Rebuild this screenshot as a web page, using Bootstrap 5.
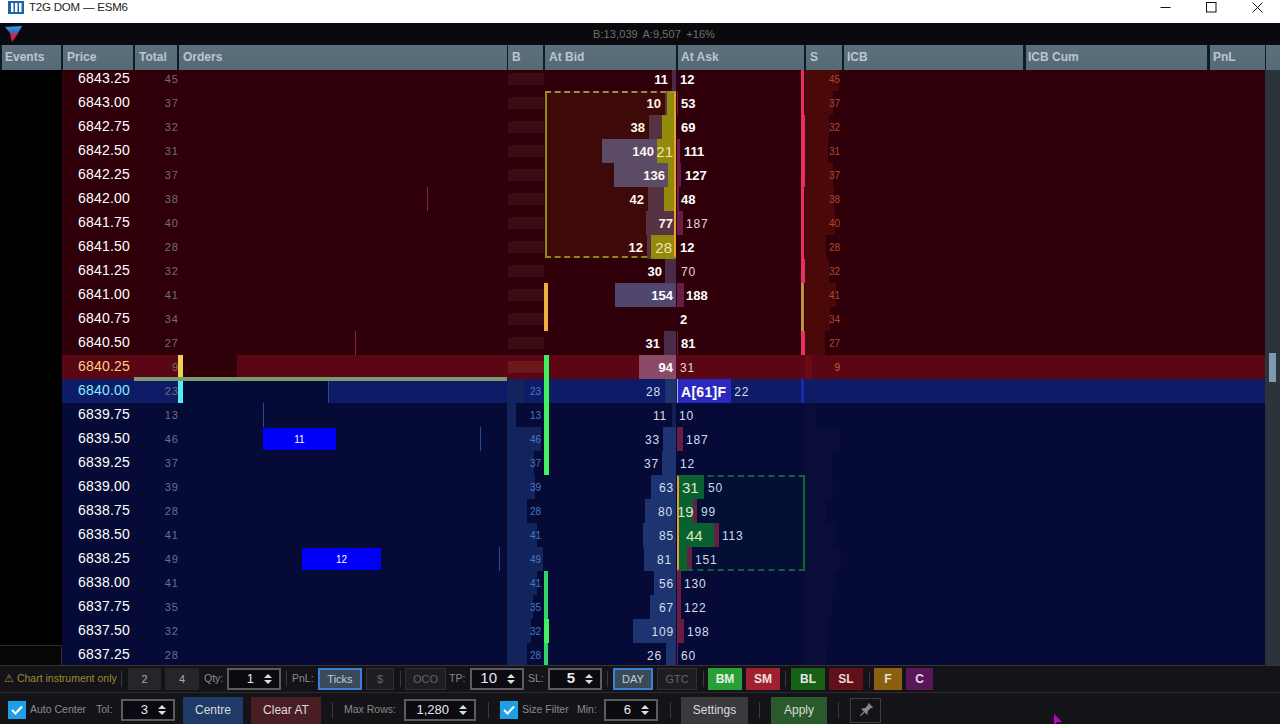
<!DOCTYPE html>
<html lang="en">
<head>
<meta charset="utf-8">
<title>T2G DOM — ESM6</title>
<link href="https://cdn.jsdelivr.net/npm/bootstrap@5.3.0/dist/css/bootstrap.min.css" rel="stylesheet">
<style>
html,body{height:724px;overflow:hidden;background:#000;font-family:"Liberation Sans",Arial,sans-serif}
.shell{width:1280px;height:724px;position:relative;overflow:hidden}
.ttl{height:23px;background:#fff;color:#222;font-size:11.5px;letter-spacing:-.2px;padding-bottom:8px}
.ttl-ic{width:16px;height:13px;margin:0 5px 0 8px}
.wbtn{width:46px;height:15px}
.topb{height:22px;background:#0a0a0e;color:#6f6f6f;font-size:11px;padding-left:5px}
.topb span{margin-left:588px;letter-spacing:.1px;word-spacing:2px}
.hdr{height:25px;background:#0c1c26}
.hd{height:25px;background:linear-gradient(#5b6f7c,#566a76);color:#bcc6cc;font-size:12px;font-weight:700;padding-left:3px;line-height:24px}
.h1{width:59px;margin-left:2px}.h2{width:70px;margin-left:2px;padding-left:4px}.h3{width:42px;margin-left:2px;padding-left:4px}.h4{width:328px;margin-left:2px;padding-left:4px}
.h5{width:35px;margin-left:1px;padding-left:4px}.h6{width:131px;margin-left:2px;padding-left:4px}.h7{width:126px;margin-left:2px}.h8{width:36px;margin-left:2px;padding-left:4px}
.h9{width:179px;margin-left:2px}.h10{width:181px;margin-left:3px;padding-left:2px}.h11{width:55px;margin-left:3px}.h12{width:14px;margin-left:1px}
.bodyw{height:595px;overflow:hidden;position:relative}
.rows{width:1265px;margin-top:-3px;position:relative}
.scr{width:15px;background:#2a343a;padding:283px 4px 0 4px}
.thumb{height:29px;background:#7f9aae}
.ro{height:24px}
.ro>div{height:24px;position:relative;flex:none}
.up{background:#30000a}.dn{background:#050a36}
.hia{background:#5a0614}.hib{background:#0e1c68}
.c-ev{width:62px;background:#000}
.c-pr{width:72px;color:#fff;font-size:14px;line-height:22px;padding-left:16px;letter-spacing:.2px}
.hia .c-pr{color:#ffd080}.hib .c-pr{color:#80f0ff}
.ro>.c-to{width:45px;margin-right:-1px;color:#6e6e6e;font-size:11px;line-height:25px;text-align:right;letter-spacing:1px}
.dn .c-to{color:#6c7080}
.c-or{width:329px}.c-b{width:37px}
.c-bd{width:133px}.c-as{width:128px}.c-s{width:38px}.c-ic{width:181px}.c-cu{width:184px}.c-pn{width:57px}
.c-bd,.c-as{display:flex;align-items:center;line-height:24px;font-size:13px;color:#e4e4ee}
.c-bd{justify-content:flex-end}
.up .c-bd,.up .c-as,.hia .c-bd,.hia .c-as{color:#fff}
.dn .c-bd,.dn .c-as,.hib .c-bd,.hib .c-as{font-size:12px;letter-spacing:.8px;color:#d8deee}
.nm{position:relative;z-index:2;top:1px}
.bo{font-weight:700;letter-spacing:0!important;font-size:13px}
.lite{font-weight:400;font-size:12px;letter-spacing:.8px;color:#e8d8dc}
.ro i{position:absolute;display:block;font-style:normal}
.pb{top:0;bottom:0;right:1px;background:#50466e}
.pd{top:0;bottom:0;right:1px;background:#4a2c48}
.pl{top:0;bottom:0;right:1px;background:#8a4a68}
.bb{top:0;bottom:0;right:1px;background:#1e3470}
.bd{top:0;bottom:0;right:1px;background:#121f50}
.yb{top:0;bottom:0;right:2px;background:#8c8a0a;z-index:1}
.rb{top:0;bottom:0;left:0;background:#6a1c44}
.gb{top:0;bottom:0;left:0;background:#0a6030}
.ro .mid{position:absolute;z-index:3;top:1px;line-height:24px;font-size:15px;color:#e8ecc8;letter-spacing:0}
.ln{top:0;bottom:0;left:0;background:#40f060;width:5px;z-index:3}
.ln4{width:4px;background:#30d468}
.lny{width:4px;background:#eeb040}
.sp{top:0;bottom:0;right:1px;width:3px;background:#e83060;z-index:3}
.sw{right:0;width:4px}.spy{background:#c09040}.spb{background:#1a2ab0}
.db{left:1px;top:6px;height:12px;background:#3c0c14}
.hia .db{background:#6a1a1a}
.nb{top:0;bottom:0;left:0;background:#12245c}
.sbar{top:0;bottom:0;left:0;background:#4a0808}
.sf{top:0;bottom:0;left:0;background:#0a0c3a}
.hia .sbar{background:#6a0a14}
.ro .num{right:3px;top:1px;line-height:24px;font-size:10px;color:#4a78c0;z-index:2}
.ro .num2{color:#a84a30}
.hia .num2{color:#d06020}
.tick{top:0;bottom:0;width:1px;background:#80283a}
.tb{background:#2a4a90}
.cur{left:0;top:0;bottom:0;width:5px;background:#f0d050;z-index:3}
.curb{background:#50f0f0}
.odk{left:0;top:0;bottom:0;background:#30000a}
.odn{left:0;top:0;bottom:0;background:#050a36}
.ob{top:1px;height:22px;background:#0000f8;color:#fff;font-size:10px;text-align:center;line-height:24px}
.askf{left:0;top:0;bottom:0;width:54px;background:#2a2ac0;border-left:1px solid #a8a8e8;z-index:1}
.af{font-weight:700;font-size:14px!important;letter-spacing:.3px!important;color:#fff!important}
.box1,.box2,.lastline,.ebox{position:absolute}
.box1{left:545px;top:24px;width:131px;height:167px;border-top:2px dashed #9c8c44;border-bottom:2px dashed #8a8a10;border-left:2px solid #8f8a10;border-right:2px solid #e8a030;background:rgba(255,140,0,.07);z-index:4;pointer-events:none}
.box2{left:677px;top:408px;width:128px;height:96px;border-top:2px dashed #14603a;border-bottom:2px dashed #14603a;border-right:2px solid #0a6a30;border-left:2px solid #e0a030;background:rgba(0,120,60,.05);z-index:4}
.lastline{left:134px;top:310px;width:373px;height:4px;background:#7a9a70;z-index:5}
.ebox{left:0;top:575px;width:62px;height:20px;border-top:1px solid #2c3020;border-right:1px solid #2c3020;background:#060606;z-index:5}
.tool{background:#141418;color:#8a8a8a;font-size:10.5px}
.t1{height:28px;border-top:1px solid #34342c;border-bottom:1px solid #2c2c30;padding-bottom:1px}
.t2{height:31px;padding-top:3px}
.sepv{width:1px;height:16px;background:#3a3a3e;flex:none}
.lbl{flex:none;white-space:nowrap}
.warn{color:#a08a30}
.btn.tbn{height:22px;padding:0;border:1px solid transparent;border-radius:0;font-size:11px;color:#a8a8a8;background:#26262a;flex:none;line-height:20px}
.btn.dim{background:#1e1e22;border-color:#303034;color:#666}
.btn.act{background:#3a4a5a;border:2px solid #3a80d8;color:#c4ccd4;line-height:18px}
.btn.buy{background:#28a038;color:#e8f0e8;font-weight:700;font-size:12px}
.btn.sel{background:#a02030;color:#f0e0e0;font-weight:700;font-size:12px}
.btn.bl{background:#186018;color:#e0e8e0;font-weight:700;font-size:12px}
.btn.sll{background:#601018;color:#e8d8d8;font-weight:700;font-size:12px}
.btn.ff{background:#8a6010;color:#e8e0d0;font-weight:700;font-size:12px}
.btn.cc{background:#581858;color:#e8d8e8;font-weight:700;font-size:12px}
.btn.big{height:27px;border:0;border-radius:0;padding:0;flex:none;font-size:12px;align-self:flex-end;line-height:27px;color:#dcdcdc}
.btn.bce{background:#1e3a66}.btn.bca{background:#4a1c24}.btn.bse{background:#3a3a3e}.btn.bap{background:#2a5a2c}
.btn.pinb{height:25px;padding:0;background:#141418;border:1px solid #3e3e42;border-radius:0;flex:none}
.spn{height:22px;border:2px solid #5c5c60;background:#0a0a10;color:#e8e8e8;font-size:13px;flex:none}
.spn span{flex:1;text-align:right}
.spn svg{margin:0 7px 0 10px;flex:none}
.sz14{font-size:15px}.sb{font-weight:700}
.cbx{width:18px;height:18px;background:#1ea0e8;flex:none}
.w16{width:16px}.w17{width:17px}.w18{width:18px}.w21{width:21px}.w27{width:27px}.w28{width:28px}.w31{width:31px}.w33{width:33px}.w34{width:34px}.w40{width:40px}.w41{width:41px}.w44{width:44px}.w46{width:46px}.w54{width:54px}.w56{width:56px}.w58{width:58px}.w60{width:60px}.w67{width:67px}.w70{width:70px}.w72{width:72px}.w112{width:112px}
.l3{margin-left:3px}.l4{margin-left:4px}.l5{margin-left:5px}.l6{margin-left:6px}.l8{margin-left:8px}.l9{margin-left:9px}.l10{margin-left:10px}.l11{margin-left:11px}.l12{margin-left:12px}
.pnt{position:absolute;left:1054px;top:714px;z-index:9}
</style>
</head>
<body>
<div class="shell d-flex flex-column">
  <div class="ttl d-flex align-items-center">
    <svg class="ttl-ic" viewBox="0 0 16 13"><rect width="16" height="13" fill="#1a66a8"/><rect x="3" y="2" width="2.5" height="9" fill="#fff"/><rect x="7" y="2" width="2.5" height="9" fill="#fff"/><rect x="11" y="2" width="2.5" height="9" fill="#fff"/></svg>
    <span>T2G DOM — ESM6</span>
    <div class="ms-auto d-flex">
      <div class="wbtn d-flex align-items-center justify-content-center"><svg width="11" height="11" viewBox="0 0 11 11"><path d="M0.5 5.5H10.5" stroke="#111" stroke-width="1"/></svg></div>
      <div class="wbtn d-flex align-items-center justify-content-center"><svg width="11" height="11" viewBox="0 0 11 11"><rect x=".5" y=".5" width="9.5" height="9.5" fill="none" stroke="#111"/></svg></div>
      <div class="wbtn d-flex align-items-center justify-content-center"><svg width="11" height="11" viewBox="0 0 11 11"><path d="M.5.5L10.5 10.5M10.5.5L.5 10.5" stroke="#111"/></svg></div>
    </div>
  </div>
  <div class="topb d-flex align-items-center">
    <svg width="18" height="17" viewBox="0 0 18 17" class="position-absolute"><defs><linearGradient id="lg" x1="0" y1="0" x2="0" y2="1"><stop offset="0" stop-color="#30a8ee"/><stop offset=".3" stop-color="#2a7ac8"/><stop offset=".55" stop-color="#c8285a"/><stop offset="1" stop-color="#e81c4a"/></linearGradient></defs><polygon points="0,1 17,0 12,9 7,16 5,7" fill="url(#lg)"/></svg>
    <span>B:13,039 A:9,507 +16%</span>
  </div>
  <div class="hdr d-flex">
    <div class="hd h1">Events</div><div class="hd h2">Price</div><div class="hd h3">Total</div><div class="hd h4">Orders</div><div class="hd h5">B</div><div class="hd h6">At Bid</div><div class="hd h7">At Ask</div><div class="hd h8">S</div><div class="hd h9">ICB</div><div class="hd h10">ICB Cum</div><div class="hd h11">PnL</div><div class="hd h12"></div>
  </div>
  <div class="bodyw d-flex">
    <div class="rows">
      <div class="ro d-flex up"><div class="c-ev"></div><div class="c-pr">6843.25</div><div class="c-to">45</div><div class="c-or"></div><div class="c-b"><i class="db" style="width:36px"></i></div><div class="c-bd"><i class="pd" style="width:4px"></i><span class="nm bo" style="padding-right:9px">11</span></div><div class="c-as"><span class="nm bo" style="padding-left:3px">12</span><i class="sp"></i></div><div class="c-s"><i class="sbar" style="width:34px"></i><i class="num num2">45</i></div><div class="c-ic"></div><div class="c-cu"></div><div class="c-pn"></div></div>
      <div class="ro d-flex up"><div class="c-ev"></div><div class="c-pr">6843.00</div><div class="c-to">37</div><div class="c-or"></div><div class="c-b"><i class="db" style="width:36px"></i></div><div class="c-bd"><i class="pd" style="width:11px"></i><i class="yb" style="width:8px"></i><span class="nm bo" style="padding-right:16px">10</span></div><div class="c-as"><i class="rb" style="width:1px"></i><span class="nm bo" style="padding-left:4px">53</span><i class="sp"></i></div><div class="c-s"><i class="sbar" style="width:28px"></i><i class="num num2">37</i></div><div class="c-ic"></div><div class="c-cu"></div><div class="c-pn"></div></div>
      <div class="ro d-flex up"><div class="c-ev"></div><div class="c-pr">6842.75</div><div class="c-to">32</div><div class="c-or"></div><div class="c-b"><i class="db" style="width:36px"></i></div><div class="c-bd"><i class="pd" style="width:27px"></i><i class="yb" style="width:13px"></i><span class="nm bo" style="padding-right:32px">38</span></div><div class="c-as"><span class="nm bo" style="padding-left:4px">69</span><i class="sp sw"></i></div><div class="c-s"><i class="sbar" style="width:24px"></i><i class="num num2">32</i></div><div class="c-ic"></div><div class="c-cu"></div><div class="c-pn"></div></div>
      <div class="ro d-flex up"><div class="c-ev"></div><div class="c-pr">6842.50</div><div class="c-to">31</div><div class="c-or"></div><div class="c-b"><i class="db" style="width:36px"></i></div><div class="c-bd"><i class="pb" style="width:74px"></i><i class="yb" style="width:18px"></i><i class="mid" style="right:4px">21</i><span class="nm bo" style="padding-right:23px">140</span></div><div class="c-as"><i class="rb" style="width:3px"></i><span class="nm bo" style="padding-left:7px">111</span><i class="sp sw"></i></div><div class="c-s"><i class="sbar" style="width:23px"></i><i class="num num2">31</i></div><div class="c-ic"></div><div class="c-cu"></div><div class="c-pn"></div></div>
      <div class="ro d-flex up"><div class="c-ev"></div><div class="c-pr">6842.25</div><div class="c-to">37</div><div class="c-or"></div><div class="c-b"><i class="db" style="width:36px"></i></div><div class="c-bd"><i class="pb" style="width:62px"></i><i class="yb" style="width:7px"></i><span class="nm bo" style="padding-right:12px">136</span></div><div class="c-as"><i class="rb" style="width:4px"></i><span class="nm bo" style="padding-left:8px">127</span><i class="sp sw"></i></div><div class="c-s"><i class="sbar" style="width:28px"></i><i class="num num2">37</i></div><div class="c-ic"></div><div class="c-cu"></div><div class="c-pn"></div></div>
      <div class="ro d-flex up"><div class="c-ev"></div><div class="c-pr">6842.00</div><div class="c-to">38</div><div class="c-or"><i class="tick" style="left:249px"></i></div><div class="c-b"><i class="db" style="width:36px"></i></div><div class="c-bd"><i class="pd" style="width:28px"></i><i class="yb" style="width:11px"></i><span class="nm bo" style="padding-right:33px">42</span></div><div class="c-as"><i class="rb" style="width:2px"></i><span class="nm bo" style="padding-left:4px">48</span><i class="sp"></i></div><div class="c-s"><i class="sbar" style="width:29px"></i><i class="num num2">38</i></div><div class="c-ic"></div><div class="c-cu"></div><div class="c-pn"></div></div>
      <div class="ro d-flex up"><div class="c-ev"></div><div class="c-pr">6841.75</div><div class="c-to">40</div><div class="c-or"></div><div class="c-b"><i class="db" style="width:36px"></i></div><div class="c-bd"><i class="pd" style="width:30px"></i><span class="nm bo" style="padding-right:4px">77</span></div><div class="c-as"><i class="rb" style="width:6px"></i><span class="nm lite" style="padding-left:9px">187</span><i class="sp"></i></div><div class="c-s"><i class="sbar" style="width:30px"></i><i class="num num2">40</i></div><div class="c-ic"></div><div class="c-cu"></div><div class="c-pn"></div></div>
      <div class="ro d-flex up"><div class="c-ev"></div><div class="c-pr">6841.50</div><div class="c-to">28</div><div class="c-or"></div><div class="c-b"><i class="db" style="width:36px"></i></div><div class="c-bd"><i class="pd" style="width:29px"></i><i class="yb" style="width:24px"></i><i class="mid" style="right:5px">28</i><span class="nm bo" style="padding-right:34px">12</span></div><div class="c-as"><span class="nm bo" style="padding-left:3px">12</span><i class="sp"></i></div><div class="c-s"><i class="sbar" style="width:21px"></i><i class="num num2">28</i></div><div class="c-ic"></div><div class="c-cu"></div><div class="c-pn"></div></div>
      <div class="ro d-flex up"><div class="c-ev"></div><div class="c-pr">6841.25</div><div class="c-to">32</div><div class="c-or"></div><div class="c-b"><i class="db" style="width:36px"></i></div><div class="c-bd"><i class="pd" style="width:11px"></i><span class="nm bo" style="padding-right:15px">30</span></div><div class="c-as"><span class="nm lite" style="padding-left:4px">70</span><i class="sp sw"></i></div><div class="c-s"><i class="sbar" style="width:24px"></i><i class="num num2">32</i></div><div class="c-ic"></div><div class="c-cu"></div><div class="c-pn"></div></div>
      <div class="ro d-flex up"><div class="c-ev"></div><div class="c-pr">6841.00</div><div class="c-to">41</div><div class="c-or"></div><div class="c-b"><i class="db" style="width:36px"></i></div><div class="c-bd"><i class="ln lny"></i><i class="pb" style="width:61px"></i><span class="nm bo" style="padding-right:4px">154</span></div><div class="c-as"><i class="rb" style="width:7px"></i><span class="nm bo" style="padding-left:9px">188</span><i class="sp spy"></i></div><div class="c-s"><i class="sbar" style="width:31px"></i><i class="num num2">41</i></div><div class="c-ic"></div><div class="c-cu"></div><div class="c-pn"></div></div>
      <div class="ro d-flex up"><div class="c-ev"></div><div class="c-pr">6840.75</div><div class="c-to">34</div><div class="c-or"></div><div class="c-b"><i class="db" style="width:36px"></i></div><div class="c-bd"><i class="ln lny"></i></div><div class="c-as"><span class="nm bo" style="padding-left:3px">2</span><i class="sp spy"></i></div><div class="c-s"><i class="sbar" style="width:25px"></i><i class="num num2">34</i></div><div class="c-ic"></div><div class="c-cu"></div><div class="c-pn"></div></div>
      <div class="ro d-flex up"><div class="c-ev"></div><div class="c-pr">6840.50</div><div class="c-to">27</div><div class="c-or"><i class="tick" style="left:177px"></i></div><div class="c-b"><i class="db" style="width:36px"></i></div><div class="c-bd"><i class="pd" style="width:12px"></i><span class="nm bo" style="padding-right:17px">31</span></div><div class="c-as"><i class="rb" style="width:1px"></i><span class="nm bo" style="padding-left:4px">81</span><i class="sp sw"></i></div><div class="c-s"><i class="sbar" style="width:20px"></i><i class="num num2">27</i></div><div class="c-ic"></div><div class="c-cu"></div><div class="c-pn"></div></div>
      <div class="ro d-flex hia"><div class="c-ev"></div><div class="c-pr">6840.25</div><div class="c-to">9</div><div class="c-or"><i class="odk" style="width:59px"></i><i class="cur"></i></div><div class="c-b"><i class="db" style="width:36px"></i></div><div class="c-bd"><i class="ln"></i><i class="pl" style="width:37px"></i><span class="nm bo" style="padding-right:4px">94</span></div><div class="c-as"><span class="nm lite" style="padding-left:3px">31</span></div><div class="c-s"><i class="sbar" style="width:7px"></i><i class="num num2">9</i></div><div class="c-ic"></div><div class="c-cu"></div><div class="c-pn"></div></div>
      <div class="ro d-flex hib"><div class="c-ev"></div><div class="c-pr">6840.00</div><div class="c-to">23</div><div class="c-or"><i class="odn" style="width:150px"></i><i class="tick tb" style="left:150px"></i><i class="cur curb"></i></div><div class="c-b"><i class="nb" style="width:17px"></i><i class="num">23</i></div><div class="c-bd"><i class="ln"></i><i class="bb" style="width:11px"></i><span class="nm" style="padding-right:16px">28</span></div><div class="c-as"><i class="askf"></i><span class="nm af" style="padding-left:4px">A[61]F</span><span class="nm" style="padding-left:8px">22</span><i class="sp spb"></i></div><div class="c-s"></div><div class="c-ic"></div><div class="c-cu"></div><div class="c-pn"></div></div>
      <div class="ro d-flex dn"><div class="c-ev"></div><div class="c-pr">6839.75</div><div class="c-to">13</div><div class="c-or"><i class="tick tb" style="left:85px"></i></div><div class="c-b"><i class="nb" style="width:9px"></i><i class="num">13</i></div><div class="c-bd"><i class="ln"></i><i class="bd" style="width:4px"></i><span class="nm" style="padding-right:10px">11</span></div><div class="c-as"><span class="nm" style="padding-left:2px">10</span></div><div class="c-s"><i class="sf" style="width:10px"></i></div><div class="c-ic"></div><div class="c-cu"></div><div class="c-pn"></div></div>
      <div class="ro d-flex dn"><div class="c-ev"></div><div class="c-pr">6839.50</div><div class="c-to">46</div><div class="c-or"><i class="ob" style="left:85px;width:73px">11</i><i class="tick tb" style="left:302px"></i></div><div class="c-b"><i class="nb" style="width:34px"></i><i class="num">46</i></div><div class="c-bd"><i class="ln"></i><i class="bb" style="width:13px"></i><span class="nm" style="padding-right:17px">33</span></div><div class="c-as"><i class="rb" style="width:6px"></i><span class="nm" style="padding-left:9px">187</span></div><div class="c-s"><i class="sf" style="width:34px"></i></div><div class="c-ic"></div><div class="c-cu"></div><div class="c-pn"></div></div>
      <div class="ro d-flex dn"><div class="c-ev"></div><div class="c-pr">6839.25</div><div class="c-to">37</div><div class="c-or"></div><div class="c-b"><i class="nb" style="width:27px"></i><i class="num">37</i></div><div class="c-bd"><i class="ln"></i><i class="bb" style="width:14px"></i><span class="nm" style="padding-right:18px">37</span></div><div class="c-as"><span class="nm" style="padding-left:3px">12</span></div><div class="c-s"><i class="sf" style="width:27px"></i></div><div class="c-ic"></div><div class="c-cu"></div><div class="c-pn"></div></div>
      <div class="ro d-flex dn"><div class="c-ev"></div><div class="c-pr">6839.00</div><div class="c-to">39</div><div class="c-or"></div><div class="c-b"><i class="nb" style="width:28px"></i><i class="num">39</i></div><div class="c-bd"><i class="bb" style="width:25px"></i><span class="nm" style="padding-right:3px">63</span></div><div class="c-as"><i class="gb" style="width:27px"></i><i class="mid" style="left:5px">31</i><span class="nm" style="padding-left:31px">50</span></div><div class="c-s"><i class="sf" style="width:28px"></i></div><div class="c-ic"></div><div class="c-cu"></div><div class="c-pn"></div></div>
      <div class="ro d-flex dn"><div class="c-ev"></div><div class="c-pr">6838.75</div><div class="c-to">28</div><div class="c-or"></div><div class="c-b"><i class="nb" style="width:20px"></i><i class="num">28</i></div><div class="c-bd"><i class="bb" style="width:31px"></i><span class="nm" style="padding-right:4px">80</span></div><div class="c-as"><i class="rb" style="width:20px"></i><i class="gb" style="width:16px"></i><i class="mid" style="left:0">19</i><span class="nm" style="padding-left:24px">99</span></div><div class="c-s"><i class="sf" style="width:21px"></i></div><div class="c-ic"></div><div class="c-cu"></div><div class="c-pn"></div></div>
      <div class="ro d-flex dn"><div class="c-ev"></div><div class="c-pr">6838.50</div><div class="c-to">41</div><div class="c-or"></div><div class="c-b"><i class="nb" style="width:30px"></i><i class="num">41</i></div><div class="c-bd"><i class="bb" style="width:33px"></i><span class="nm" style="padding-right:3px">85</span></div><div class="c-as"><i class="rb" style="width:42px"></i><i class="gb" style="width:37px"></i><i class="mid" style="left:9px">44</i><span class="nm" style="padding-left:45px">113</span></div><div class="c-s"><i class="sf" style="width:30px"></i></div><div class="c-ic"></div><div class="c-cu"></div><div class="c-pn"></div></div>
      <div class="ro d-flex dn"><div class="c-ev"></div><div class="c-pr">6838.25</div><div class="c-to">49</div><div class="c-or"><i class="ob" style="left:124px;width:79px">12</i><i class="tick tb" style="left:321px"></i></div><div class="c-b"><i class="nb" style="width:36px"></i><i class="num">49</i></div><div class="c-bd"><i class="bb" style="width:32px"></i><span class="nm" style="padding-right:5px">81</span></div><div class="c-as"><i class="rb" style="width:15px"></i><i class="gb" style="width:10px"></i><span class="nm" style="padding-left:18px">151</span></div><div class="c-s"><i class="sf" style="width:36px"></i></div><div class="c-ic"></div><div class="c-cu"></div><div class="c-pn"></div></div>
      <div class="ro d-flex dn"><div class="c-ev"></div><div class="c-pr">6838.00</div><div class="c-to">41</div><div class="c-or"></div><div class="c-b"><i class="nb" style="width:30px"></i><i class="num">41</i></div><div class="c-bd"><i class="ln ln4"></i><i class="bb" style="width:22px"></i><span class="nm" style="padding-right:3px">56</span></div><div class="c-as"><i class="rb" style="width:4px"></i><span class="nm" style="padding-left:7px">130</span></div><div class="c-s"><i class="sf" style="width:30px"></i></div><div class="c-ic"></div><div class="c-cu"></div><div class="c-pn"></div></div>
      <div class="ro d-flex dn"><div class="c-ev"></div><div class="c-pr">6837.75</div><div class="c-to">35</div><div class="c-or"></div><div class="c-b"><i class="nb" style="width:26px"></i><i class="num">35</i></div><div class="c-bd"><i class="ln ln4"></i><i class="bb" style="width:26px"></i><span class="nm" style="padding-right:3px">67</span></div><div class="c-as"><i class="rb" style="width:4px"></i><span class="nm" style="padding-left:7px">122</span></div><div class="c-s"><i class="sf" style="width:26px"></i></div><div class="c-ic"></div><div class="c-cu"></div><div class="c-pn"></div></div>
      <div class="ro d-flex dn"><div class="c-ev"></div><div class="c-pr">6837.50</div><div class="c-to">32</div><div class="c-or"></div><div class="c-b"><i class="nb" style="width:24px"></i><i class="num">32</i></div><div class="c-bd"><i class="ln"></i><i class="bb" style="width:43px"></i><span class="nm" style="padding-right:3px">109</span></div><div class="c-as"><i class="rb" style="width:7px"></i><span class="nm" style="padding-left:10px">198</span></div><div class="c-s"><i class="sf" style="width:24px"></i></div><div class="c-ic"></div><div class="c-cu"></div><div class="c-pn"></div></div>
      <div class="ro d-flex dn"><div class="c-ev"></div><div class="c-pr">6837.25</div><div class="c-to">28</div><div class="c-or"></div><div class="c-b"><i class="nb" style="width:20px"></i><i class="num">28</i></div><div class="c-bd"><i class="ln ln4"></i><i class="bb" style="width:10px"></i><span class="nm" style="padding-right:15px">26</span></div><div class="c-as"><i class="rb" style="width:1px"></i><span class="nm" style="padding-left:4px">60</span></div><div class="c-s"><i class="sf" style="width:21px"></i></div><div class="c-ic"></div><div class="c-cu"></div><div class="c-pn"></div></div>
      <div class="box1"></div>
      <div class="box2"></div>
      <div class="lastline"></div>
    </div>
    <div class="scr"><div class="thumb"></div></div>
    <div class="ebox"></div>
  </div>
  <div class="tool t1 d-flex align-items-center">
    <span class="lbl warn w112 l4">⚠ Chart instrument only</span><div class="sepv l5"></div>
    <button class="btn tbn w33 l6">2</button><button class="btn tbn w34 l4">4</button>
    <span class="lbl w18 l5">Qty:</span>
    <div class="spn w54 l5 d-flex align-items-center"><span>1</span><svg width="8" height="12" viewBox="0 0 8 12"><path d="M0 5L4 1L8 5ZM0 7L4 11L8 7Z" fill="#ddd"/></svg></div>
    <div class="sepv l5"></div>
    <span class="lbl w21 l5">PnL:</span>
    <button class="btn tbn act w44 l5">Ticks</button><button class="btn tbn dim w28 l4">$</button><div class="sepv l6"></div>
    <button class="btn tbn dim w41 l4">OCO</button>
    <span class="lbl w17 l3">TP:</span>
    <div class="spn w54 l4 d-flex align-items-center sz14"><span>10</span><svg width="8" height="12" viewBox="0 0 8 12"><path d="M0 5L4 1L8 5ZM0 7L4 11L8 7Z" fill="#ddd"/></svg></div>
    <span class="lbl w16 l4">SL:</span>
    <div class="spn w54 l4 d-flex align-items-center sz14 sb"><span>5</span><svg width="8" height="12" viewBox="0 0 8 12"><path d="M0 5L4 1L8 5ZM0 7L4 11L8 7Z" fill="#ddd"/></svg></div>
    <div class="sepv l5"></div>
    <button class="btn tbn act w40 l5">DAY</button><button class="btn tbn dim w40 l4">GTC</button><div class="sepv l6"></div>
    <button class="btn tbn buy w34 l4">BM</button><button class="btn tbn sel w34 l4">SM</button><div class="sepv l5"></div>
    <button class="btn tbn bl w34 l5">BL</button><button class="btn tbn sll w34 l4">SL</button><div class="sepv l6"></div>
    <button class="btn tbn ff w28 l4">F</button><button class="btn tbn cc w27 l4">C</button>
  </div>
  <div class="tool t2 d-flex align-items-center">
    <div class="cbx l8 d-flex align-items-center justify-content-center"><svg width="12" height="10" viewBox="0 0 12 10"><path d="M1 5L4.5 8.5L11 1.5" fill="none" stroke="#fff" stroke-width="2"/></svg></div>
    <span class="lbl w58 l4">Auto Center</span><span class="lbl w16 l8">Tol:</span>
    <div class="spn w54 l9 d-flex align-items-center"><span>3</span><svg width="8" height="12" viewBox="0 0 8 12"><path d="M0 5L4 1L8 5ZM0 7L4 11L8 7Z" fill="#ddd"/></svg></div>
    <button class="btn big bce w60 l8">Centre</button><button class="btn big bca w70 l8">Clear AT</button>
    <div class="sepv l11"></div>
    <span class="lbl w54 l11">Max Rows:</span>
    <div class="spn w72 l6 d-flex align-items-center"><span>1,280</span><svg width="8" height="12" viewBox="0 0 8 12"><path d="M0 5L4 1L8 5ZM0 7L4 11L8 7Z" fill="#ddd"/></svg></div>
    <div class="sepv l12"></div>
    <div class="cbx l11 d-flex align-items-center justify-content-center"><svg width="12" height="10" viewBox="0 0 12 10"><path d="M1 5L4.5 8.5L11 1.5" fill="none" stroke="#fff" stroke-width="2"/></svg></div>
    <span class="lbl w46 l4">Size Filter</span><span class="lbl w18 l9">Min:</span>
    <div class="spn w54 l9 d-flex align-items-center"><span>6</span><svg width="8" height="12" viewBox="0 0 8 12"><path d="M0 5L4 1L8 5ZM0 7L4 11L8 7Z" fill="#ddd"/></svg></div>
    <div class="sepv l12"></div>
    <button class="btn big bse w67 l10">Settings</button><div class="sepv l11"></div>
    <button class="btn big bap w56 l11">Apply</button><div class="sepv l11"></div>
    <button class="btn pinb w31 l11 d-flex align-items-center justify-content-center"><svg width="15" height="15" viewBox="0 0 15 15"><g transform="rotate(45 7.5 7.5)" fill="#8a8a8a"><rect x="4.5" y="0" width="6" height="1.5"/><rect x="5.5" y="1.5" width="4" height="5"/><polygon points="3,9.5 12,9.5 9.5,6 5.5,6"/><rect x="7" y="9.5" width="1.2" height="5.5"/></g></svg></button>
  </div>
  <svg class="pnt" width="10" height="12" viewBox="0 0 10 12"><polygon points="0,0 8,8 3,8 0,12" fill="#c000c8"/></svg>
</div>
<script src="https://cdn.jsdelivr.net/npm/bootstrap@5.3.0/dist/js/bootstrap.bundle.min.js"></script>
</body>
</html>
